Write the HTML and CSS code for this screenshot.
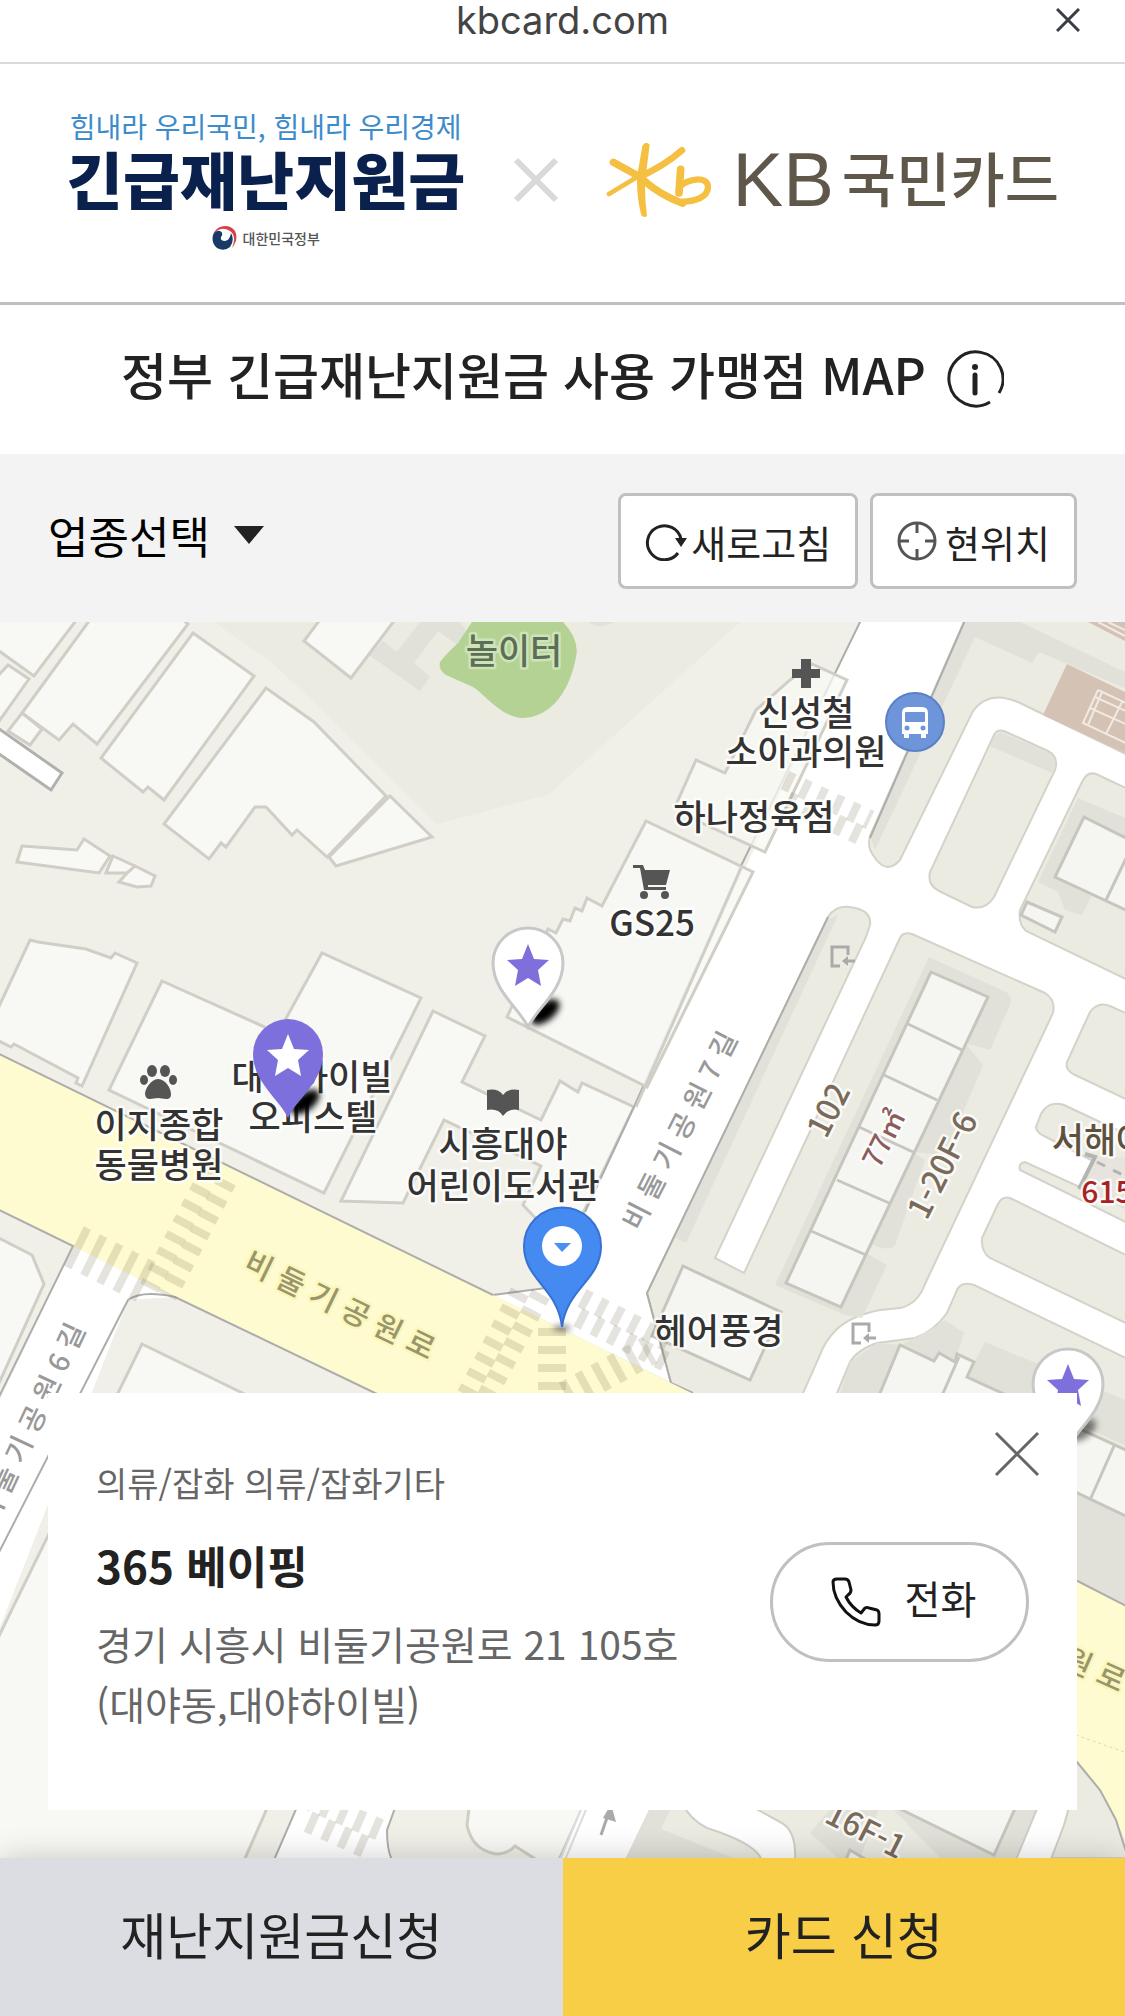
FILE: index.html
```html
<!DOCTYPE html>
<html lang="ko">

<head>
  <meta charset="UTF-8" />
  <meta name="viewport" content="width=device-width, initial-scale=1.0" />
  <title>정부 긴급재난지원금 사용 가맹점 MAP</title>
  <link rel="stylesheet" href="styles.css">
</head>

<body>
  <div class="browser-bar">
    <span class="browser-url">kbcard.com</span>
    <button class="browser-close" type="button" aria-label="창 닫기">
      <svg width="24" height="24" viewBox="0 0 24 24"><path d="M1 1 L23 23 M23 1 L1 23" stroke="#3a3d45" stroke-width="3" /></svg>
    </button>
  </div>

  <header class="banner">
    <div class="relief-logo">
      <span class="relief-slogan">힘내라 우리국민, 힘내라 우리경제</span>
      <strong class="relief-name">긴급재난지원금</strong>
      <span class="gov">
        <svg width="26" height="26" viewBox="0 0 26 26">
          <path d="M1 10 A12.500 12.500 0 0 1 23 6 Q27 14 20 23 Q25 11 18 6 Q8 0 1 10Z" fill="#d8404c" />
          <path d="M1 10 Q4 5 8 6 Q12 8 9 12 Q8 16 13 16 Q18 15 19 8 Q23 15 18 22 Q12 27 5 23 Q-1 18 1 10Z" fill="#173a66" />
        </svg>
        대한민국정부
      </span>
    </div>
    <svg class="cross" width="46" height="46" viewBox="0 0 46 46"><path d="M3 3 L43 43 M43 3 L3 43" stroke="#d9d9d9" stroke-width="6" /></svg>
    <div class="kb-logo">
      <svg width="106" height="76" viewBox="68 46 318 228">
        <g fill="none" stroke="#f5bf42" stroke-linecap="round" stroke-linejoin="round">
          <path d="M177 58 Q187 40 199 54 L187 150 Q182 200 191 268 Q182 275 174 266 Q160 215 161 150Z" fill="#f5bf42" stroke="none" />
          <path d="M90 107 L172 152" stroke-width="22" />
          <path d="M77 202 L160 152" stroke-width="14" />
          <path d="M165 152 Q240 120 296 71" stroke-width="20" />
          <path d="M180 160 Q230 205 298 230" stroke-width="22" />
          <path d="M292 128 L287 199" stroke-width="23" />
          <path d="M290 180 C310 158 372 145 374 180 C374 212 335 224 298 225" stroke-width="19" />
        </g>
      </svg>
      <span class="kb-letters">KB</span>
      <span class="kb-name">국민카드</span>
    </div>
  </header>

  <div class="page-title">
    <h1>정부 긴급재난지원금 사용 가맹점 MAP</h1>
    <button class="info" type="button" aria-label="안내">
      <svg width="58" height="60" viewBox="0 0 58 60" fill="none" stroke="#222" stroke-width="3">
        <path d="M53 43 A27 27 0 1 0 44 52" />
        <path d="M29 25 V43" stroke-width="5" stroke-linecap="round" />
        <circle cx="29" cy="17" r="3" fill="#222" stroke="none" />
      </svg>
    </button>
  </div>

  <div class="filters">
    <label class="category">
      <select aria-label="업종선택">
        <option>업종선택</option>
      </select>
      <svg width="30" height="18" viewBox="0 0 30 18"><path d="M0 0 H30 L15 18Z" fill="#222" /></svg>
    </label>
    <button class="tool" type="button">
      <svg width="42" height="40" viewBox="0 0 42 40" fill="none" stroke="#222" stroke-width="3">
        <path d="M33 32 A17 17 0 1 1 36 18" />
        <path d="M30 17 H42 L36 26Z" fill="#222" stroke="none" />
      </svg>새로고침
    </button>
    <button class="tool" type="button">
      <svg width="40" height="40" viewBox="0 0 40 40" fill="none" stroke="#555" stroke-width="3">
        <circle cx="20" cy="20" r="18" />
        <path d="M20 2 V12 M20 28 V38 M2 20 H12 M28 20 H38" />
      </svg><span class="tool-text">현위치</span>
    </button>
  </div>

  <main class="map">
    <svg class="map-canvas" viewBox="0 622 1125 1236" preserveAspectRatio="xMidYMid slice">
      <defs>
        <filter id="soft" x="-50%" y="-50%" width="200%" height="200%"><feGaussianBlur stdDeviation="3" /></filter>
        <path id="star" d="M0 -21 L6 -6 L21 -5 L10 5 L13 21 L0 13 L-13 21 L-10 5 L-21 -5 L-6 -6Z" />
        <path id="pin" d="M0 64 C-8 46 -35 28 -35 0 A35 35 0 0 1 35 0 C35 28 8 46 0 64Z" />
        <g id="gate" fill="none" stroke="#aaa" stroke-width="3">
          <path d="M9 20 H1 V1 H17 V9 M24 15 H13" />
          <path d="M17 10 L11 15 L17 20Z" fill="#aaa" stroke="none" />
        </g>
      </defs>

      <rect y="622" width="1125" height="1236" fill="#f0efe8" />

      <!-- park -->
      <path d="M214 622 L271 662 L314 702 L437 824 L550 794 L560 784 L740 622Z" fill="#ebebe2" />
      <path d="M420 622 L460 622 L468 634 L456 644 L438 631 L414 663 L430 677 L420 691 L369 655 L383 641 L397 652Z" fill="#e1e1da" />
      <path d="M588 622 H614 Q600 630 588 622Z" fill="#e1e1da" />
      <path d="M472 622 H563 Q580 640 576 657 C570 690 552 717 523 718 C500 717 486 695 473 687 L446 675 Q438 670 440 662 Q445 655 458 643Z" fill="#b4d294" />

      <!-- buildings, west side -->
      <g class="building">
        <path d="M-5 618 H78 L34 676 L-5 648Z" />
        <path d="M-5 679 L8 665 L29 679 L-5 727Z" />
        <path d="M92 617 L22 713 L59 740 L73 724 L97 744 L188 624 L180 617Z" />
        <path d="M22 713 L42 729 L30 745 L8 731Z" />
        <path d="M193 633 L254 676 L164 800 L148 787 L143 792 L101 758Z" />
        <path d="M266 688 L314 722 L386 796 L327 857 L297 830 L292 835 L266 807 H255 L226 847 L221 843 L209 859 L164 824Z" />
        <path d="M390 796 L432 837 L336 866 L329 857Z" />
        <path d="M322 617 L304 641 L351 678 L397 617Z" />
        <path d="M22 846 L77 850 L84 839 L110 856 L99 873 L17 862Z" />
        <path d="M113 856 L135 866 L130 873 H106Z" />
        <path d="M135 866 L155 876 L151 886 L137 887 L119 882 L128 872Z" />
        <path d="M-5 1015 L30 940 L38 942 L86 949 L111 958 L115 953 L137 963 L82 1086 L76 1083 L78 1078 L14 1044 L11 1047 L-5 1039Z" />
        <path d="M162 981 L278 1033 L322 953 L421 998 L324 1193 L109 1090Z" />
        <path d="M433 1011 L485 1036 L462 1082 L541 1120 L560 1081 L578 1092 L582 1083 L634 1107 L575 1230 L545 1228 L523 1205 L541 1166 L444 1120 L403 1203 L341 1201Z" />
      </g>
      <path d="M-5 726 L62 773 L51 790 L-5 751Z" fill="#fff" stroke="#b0b0ae" stroke-width="3" />

      <!-- side streets -->
      <path d="M860 622 H1125 V1620 L693 1393 L493 1295 L546 1288 L585 1212 L634 1107Z" fill="#fff" />
      <path d="M862 618 L740 868 L634 1107 L585 1212 M493 1295 L546 1288" class="curb" />
      <path d="M73 1246 L-5 1410 V1640 L128 1300 L175 1297Z" fill="#fff" />
      <g class="building">
        <path d="M812 664 L847 680 L765 852 L704 824 L675 807 L696 760 L725 773 L756 710 L790 680Z" fill-opacity=".75" />
        <path d="M646 821 L753 872 L647 1087 L507 1017 L548 929 L556 933 L563 919 L570 921 L575 908 L582 911 L587 898 L602 906Z" fill-opacity=".85" />
        <path d="M741 868 L636 1107" fill="none" />
      </g>

      <!-- apartment blocks -->
      <g class="block">
        <path d="M966 617 H1130 V756 L1022 704 Q990 688 973 711 L900 860 Q886 876 873 855 Q867 847 870 836Z" />
        <path d="M994 735 Q997 729 1004 731 L1048 751 Q1059 757 1055 770 L994 897 Q986 910 972 907 L939 891 Q927 885 930 872Z" />
        <path d="M1130 790 L1096 774 Q1087 771 1082 782 L1020 910 Q1018 924 1026 931 L1130 981Z" />
        <path d="M828 917 Q835 905 850 907 Q872 910 870 925 L866 937 L715 1258 L744 1273 L899 940 Q902 931 912 934 L1045 993 Q1056 1000 1053 1013 L925 1284 Q918 1304 900 1308 L880 1310 Q850 1316 836 1330 Q825 1341 820 1355 L800 1400 L690 1400 L671 1383 L647 1293Z" />
        <path d="M1130 1015 L1110 1006 Q1098 1001 1090 1012 L1067 1062 Q1065 1069 1073 1074 L1130 1101Z" />
        <path d="M1130 1136 L1064 1105 Q1048 1100 1041 1114 L1036 1127 Q1036 1132 1044 1136 L1130 1180Z" />
        <path d="M1130 1210 L1025 1162 Q1018 1163 1020 1170 L1130 1224Z" />
        <path d="M1130 1257 L1010 1198 Q1002 1196 998 1204 L982 1238 Q981 1252 990 1258 L1130 1325Z" />
        <path d="M1130 1360 L974 1285 Q961 1281 957 1290 L947 1313 Q934 1331 915 1338 L877 1343 Q857 1350 850 1362 L830 1410 V1858 H1130Z" />
      </g>
      <g fill="#e1e1d9">
        <path d="M965 622 H1020 L1125 672 V688 L1039 652 L1032 663 L975 637 L875 850 L871 838Z" />
        <path d="M994 737 L1000 732 L1048 752 L1056 762 L1052 773 L990 746Z" />
        <path d="M1078 798 L1125 818 V908 L1092 895 L1082 915 L1065 910 L1058 892 L1038 882Z" />
        <path d="M827 920 L838 915 L686 1243 L674 1237Z" />
        <path d="M929 957 L1006 992 Q1013 996 1010 1005 L990 1050 L965 1043 L983 1065 L945 1155 L913 1152 L925 1160 L895 1245 Q890 1252 873 1245 L866 1253 L887 1265 L862 1318 L845 1315 L775 1285Z" />
        <path d="M935 1327 L945 1320 L964 1333 L955 1360 L937 1362 L900 1345 L915 1338Z" />
        <path d="M985 1342 L1125 1400 V1445 L967 1377Z" />
        <path d="M1060 1485 L1125 1515 V1605 L1060 1575Z" />
        <path d="M877 1343 L900 1345 L878 1400 H838 L850 1362Z" />
      </g>
      <g class="building home">
        <path d="M1084 817 L1130 840 V912 L1055 877Z M1130 850 L1106 900" />
        <path d="M1027 902 L1062 917 L1055 932 L1021 915Z" />
        <path d="M931 972 L988 997 L841 1307 L786 1283Z" />
        <path d="M908 1024 L962 1050 M884 1075 L937 1100 M859 1127 L913 1152 M837 1180 L889 1203 M811 1231 L866 1255" />
        <path d="M683 1266 L781 1312 L750 1380 L652 1336Z" />
        <path d="M900 1345 L934 1361 L939 1353 L955 1362 L957 1354 L974 1362 L967 1377 L1130 1452 V1518 L878 1398Z" />
        <path d="M959 1357 L940 1400 M1114 1446 L1090 1500" />
      </g>
      <path d="M966 618 L870 838 M828 917 L647 1293 L671 1383 L693 1393" class="curb" />

      <!-- sports court -->
      <path d="M1067 664 L1125 692 V753 L1043 715Z M1088 622 H1125 V641Z" fill="#d4c2b4" />
      <g fill="none" stroke="#f1e9e2" stroke-width="2">
        <path d="M1098 690 L1130 705 M1095 697 L1130 713 M1098 690 L1083 723 L1130 745 M1102 692 L1088 725 M1090 708 L1130 726 M1122 702 L1106 734" />
        <path d="M1098 622 L1125 636 M1108 622 L1125 630" />
      </g>
      <path d="M1095 1157 H1125 V1208 L1077 1190Z" fill="#e6e4dd" />
      <path d="M1085 1154 L1095 1157 L1079 1189" fill="none" stroke="#b4b4b2" stroke-width="4" />
      <path d="M1097 1162 L1125 1176" stroke="#b4b4b2" stroke-width="3" stroke-dasharray="9 9" />

      <!-- main road -->
      <path d="M0 1055 L493 1295 L671 1383 L1125 1605 V1840 L1116 1820 L1100 1790 L1077 1762 L1000 1700 L375 1393 L175 1297 L73 1246 L0 1210Z" fill="#fffbd0" />
      <path d="M-5 1052 L493 1295 M-5 1208 L73 1246 L-5 1405 M-5 1560 L128 1300 Q142 1290 175 1297 L400 1405 M1060 1572 L1130 1608 M1060 1745 L1077 1762 L1100 1790 L1116 1820 L1128 1858" class="curb" />
      <path d="M1070 1733 L1130 1754" stroke="#ddd9ae" stroke-dasharray="3 3" />
      <g class="building">
        <path d="M-5 1236 L32 1255 L44 1284 L-5 1392Z" />
        <path d="M142 1344 L400 1470 L265 1813 L243 1863 H-5 V1644Z" />
      </g>

      <!-- south edge -->
      <path d="M296 1810 L274 1858 H391 L387 1830 L396 1800 H300Z" fill="#fff" />
      <path d="M300 1800 L274 1860 M398 1800 L387 1830 Q387 1850 392 1860 M654 1800 L626 1860" class="curb" />
      <path d="M470 1800 L467 1825 Q472 1850 496 1854 Q508 1854 515 1846 L540 1862 H558 L586 1800Z" class="building" />
      <path d="M586 1800 L560 1858 H626 L654 1800Z" fill="#fff" />
      <path d="M585 1800 L560 1860 M590 1800 L565 1860" stroke="#ddd" stroke-width="2" />
      <path d="M652 1806 L626 1858 H1045 L1060 1800Z" fill="#ebebe2" />
      <path d="M672 1806 L661 1829 L733 1858 H626 L651 1806Z M833 1806 L810 1833 L838 1858 H860 L880 1806Z M890 1806 H1040 L1015 1858 H940Z" fill="#e1e1d9" />
      <path d="M680 1800 Q690 1820 707 1828 Q760 1845 762 1862 H795 Q797 1830 780 1822 L740 1800Z" fill="#fff" stroke="#d0cec6" stroke-width="2" />
      <path d="M890 1804 L994 1855 L1017 1804Z M850 1850 L870 1862 H845Z" class="building home" />
      <path d="M1039 1804 L1015 1862 H1050 L1064 1825 L1070 1804Z" fill="#fff" stroke="#d0cec6" stroke-width="2" />
      <path d="M601 1835 L611 1806" stroke="#aaa" stroke-width="3" />
      <path d="M603 1818 L611 1804 L616 1822Z" fill="#aaa" />

      <!-- crosswalks -->
      <g fill="none" stroke="#6e6440" stroke-opacity=".18">
        <path d="M210 1171 L149 1288" stroke-width="20" stroke-dasharray="8 10" />
        <path d="M231 1173 L167 1296" stroke-width="20" stroke-dasharray="8 10" stroke-dashoffset="9" />
        <path d="M74 1246 L154 1286" stroke-width="44" stroke-dasharray="8 10" />
        <path d="M541 1294 L484 1402" stroke-width="20" stroke-dasharray="8 10" />
        <path d="M524 1284 L465 1398" stroke-width="20" stroke-dasharray="8 10" stroke-dashoffset="9" />
        <path d="M552 1328 V1395" stroke-width="28" stroke-dasharray="8 10" />
        <path d="M582 1298 L668 1342" stroke-width="20" stroke-dasharray="8 10" />
        <path d="M570 1313 L668 1363" stroke-width="20" stroke-dasharray="8 10" stroke-dashoffset="9" />
        <path d="M566 1396 L650 1350" stroke-width="30" stroke-dasharray="8 10" />
        <path d="M785 780 L870 820" stroke-width="20" stroke-dasharray="8 10" />
        <path d="M779 797 L866 838" stroke-width="20" stroke-dasharray="8 10" stroke-dashoffset="9" />
        <path d="M306 1798 L380 1830" stroke-width="22" stroke-dasharray="8 10" />
        <path d="M300 1818 L372 1850" stroke-width="22" stroke-dasharray="8 10" stroke-dashoffset="9" />
      </g>

      <!-- street names -->
      <g class="street">
        <text transform="translate(340 1305) rotate(26)" y="11" class="on-yellow">비 둘 기 공 원 로</text>
        <text transform="translate(679 1130) rotate(-63)" y="11">비 둘 기 공 원 7 길</text>
        <text transform="translate(30 1423) rotate(-65)" y="11">비 둘 기 공 원 6 길</text>
        <text transform="translate(1062 1655) rotate(24)" y="11" class="on-yellow">기 공 원 로</text>
      </g>
      <g class="lot">
        <text transform="translate(828 1110) rotate(-63)" y="12">102</text>
        <text transform="translate(883 1138) rotate(-63)" y="11" class="area">77㎡</text>
        <text transform="translate(942 1165) rotate(-63)" y="12">1-20F-6</text>
        <text transform="translate(866 1830) rotate(27)" y="12">16F-1</text>
      </g>

      <!-- places -->
      <g class="place">
        <text x="514" y="664" class="park-name">놀이터</text>
        <text x="806" y="726">신성철</text>
        <text x="806" y="765">소아과의원</text>
        <text x="754" y="830">하나정육점</text>
        <text x="652" y="936">GS25</text>
        <text x="312" y="1090">대야하이빌</text>
        <text x="313" y="1130">오피스텔</text>
        <text x="159" y="1138">이지종합</text>
        <text x="159" y="1178">동물병원</text>
        <text x="503" y="1157">시흥대야</text>
        <text x="503" y="1199">어린이도서관</text>
        <text x="719" y="1344">헤어풍경</text>
        <text x="1100" y="1153" class="apartment">서해아</text>
        <text x="1107" y="1203" class="number">615</text>
      </g>
      <path d="M801 659 H811 V669 H820 V678 H811 V688 H801 V678 H792 V669 H801Z" fill="#555" />
      <path d="M633 865 H643 L645 870 H670 L666 885 H648 V887 H666 V890 H644 L640 868 H633Z" fill="#555" />
      <circle cx="644" cy="895" r="4" fill="#555" />
      <circle cx="665" cy="895" r="4" fill="#555" />
      <g fill="#555">
        <ellipse cx="152" cy="1071" rx="5" ry="6" />
        <ellipse cx="165" cy="1071" rx="5" ry="6" />
        <ellipse cx="144" cy="1080" rx="4" ry="5" />
        <ellipse cx="173" cy="1080" rx="4" ry="5" />
        <path d="M158 1079 C166 1079 171 1089 171 1094 C171 1102 163 1098 158 1098 C153 1098 146 1102 145 1094 C145 1089 151 1079 158 1079Z" />
        <path d="M487 1090 Q498 1088 503 1095 Q508 1088 519 1090 V1110 Q508 1108 503 1116 Q498 1108 487 1110Z" />
      </g>
      <circle cx="915" cy="722" r="29" fill="#6e94da" stroke="#5a80c6" stroke-width="2" />
      <path d="M902 713 Q902 707 908 707 H922 Q928 707 928 713 V734 H926 V738 H921 V734 H909 V738 H904 V734 H902Z" fill="#fff" />
      <rect x="905" y="712" width="20" height="10" rx="1" fill="#6e94da" />
      <circle cx="907" cy="728" r="2.500" fill="#6e94da" />
      <circle cx="923" cy="728" r="2.500" fill="#6e94da" />
      <use href="#gate" x="831" y="946" />
      <use href="#gate" x="852" y="1323" />

      <!-- pins -->
      <g fill="#000" filter="url(#soft)">
        <ellipse cx="545" cy="1012" rx="17" ry="9" transform="rotate(-38 545 1012)" />
        <ellipse cx="305" cy="1102" rx="17" ry="9" transform="rotate(-38 305 1102)" />
        <ellipse cx="1083" cy="1430" rx="15" ry="8" transform="rotate(-38 1083 1430)" fill-opacity=".5" />
        <ellipse cx="562" cy="1328" rx="9" ry="2" fill-opacity=".7" />
      </g>
      <g transform="translate(528 963)">
        <use href="#pin" fill="#fff" stroke="#c8c8c8" stroke-width="3" />
        <use href="#star" y="2" fill="#7d70dc" />
      </g>
      <g transform="translate(288 1054)">
        <use href="#pin" fill="#7d70dc" />
        <use href="#star" y="1" fill="#fff" />
      </g>
      <g transform="translate(1068 1384)">
        <use href="#pin" fill="#fff" stroke="#c8c8c8" stroke-width="3" />
        <use href="#star" y="1" fill="#7d70dc" />
      </g>
      <path d="M562 1327 C558 1288 524 1280 524 1246 A38 38 0 0 1 601 1246 C601 1280 567 1288 562 1327Z" fill="#458af0" stroke="#3672d2" stroke-width="2" />
      <circle cx="562" cy="1246" r="20" fill="#fff" />
      <path d="M554 1243 H571 L562 1252Z" fill="#4a8ff2" />
    </svg>

    <section class="store">
      <div class="store-info">
        <p class="store-type">의류/잡화 의류/잡화기타</p>
        <h2 class="store-name">365 베이핑</h2>
        <p class="store-address">경기 시흥시 비둘기공원로 21 105호<br>(대야동,대야하이빌)</p>
      </div>
      <a class="call" href="#">
        <svg width="50" height="50" viewBox="0 0 50 50" fill="none" stroke="#111" stroke-width="3" stroke-linejoin="round">
          <path d="M2 5 Q2 2 6 2 H14 Q17 2 18 5 L20 13 Q20 16 17 18 L15 20 Q20 30 30 36 L34 31 Q36 30 38 31 L46 33 Q48 34 48 37 V44 Q48 48 44 48 Q28 48 15 35 Q2 21 2 5Z" />
        </svg>
        <span class="call-text">전화</span>
      </a>
      <button class="store-close" type="button" aria-label="닫기">
        <svg width="46" height="46" viewBox="0 0 46 46"><path d="M2 2 L44 44 M44 2 L2 44" stroke="#666" stroke-width="3" /></svg>
      </button>
    </section>
  </main>

  <nav class="apply">
    <a class="apply-relief" href="#">재난지원금신청</a>
    <a class="apply-card" href="#">카드 신청</a>
  </nav>
</body>

</html>
```
FILE: styles.css
```css
* {
  box-sizing: border-box;
}

body {
  display: flex;
  flex-direction: column;
  min-height: 100vh;
  margin: 0;
  font-family: "Noto Sans CJK KR", sans-serif;
  color: #222;
  background: #fff;
}

h1,
h2,
p {
  margin: 0;
}

button {
  padding: 0;
  border: 0;
  background: none;
  font-family: inherit;
  color: inherit;
}

svg {
  display: block;
  flex: none;
}

a {
  color: inherit;
  text-decoration: none;
}

/* Top bar of the in-app browser */
.browser-bar {
  display: grid;
  grid-template-columns: 1fr auto 1fr;
  align-items: center;
  padding: 0 45px 22px;
  border-bottom: 2px solid #d9d9d9;
}

.browser-url {
  grid-column: 2;
  font-family: Inter, sans-serif;
  font-size: 38px;
  line-height: 40px;
  color: #444;
}

.browser-close {
  justify-self: end;
}

/* Logos */
.banner {
  display: flex;
  align-items: center;
  justify-content: space-between;
  padding: 40px 66px 46px;
  border-bottom: 3px solid #c0c0c0;
}

.relief-logo {
  display: flex;
  flex-direction: column;
  align-items: center;
}

.relief-slogan {
  font-size: 28px;
  line-height: 44px;
  color: #3c8ccb;
}

.relief-name {
  font-size: 62px;
  font-weight: 900;
  line-height: 60px;
  color: #0a214e;
}

.gov {
  display: flex;
  align-items: center;
  gap: 5px;
  padding-top: 12px;
  font-size: 14px;
  font-weight: 500;
  line-height: 36px;
  color: #555;
}

.kb-logo {
  display: flex;
  align-items: center;
  color: #5f584a;
}

.kb-letters {
  padding: 0 8px 0 20px;
  font-family: "Liberation Sans", sans-serif;
  font-size: 76px;
  line-height: 76px;
}

.kb-name {
  padding-bottom: 6px;
  font-size: 59px;
  font-weight: 500;
  line-height: 76px;
}

.page-title {
  display: flex;
  align-items: center;
  justify-content: center;
  gap: 20px;
  height: 149px;
}

.page-title h1 {
  padding-bottom: 14px;
  font-size: 50px;
  font-weight: 500;
  line-height: 64px;
}

/* Category and map tools */
.filters {
  display: flex;
  align-items: center;
  gap: 12px;
  padding: 39px 48px 33px;
  background: #f3f3f3;
}

.category {
  display: flex;
  align-items: center;
  gap: 24px;
  margin-right: auto;
  padding-bottom: 12px;
}

.category select {
  padding: 0;
  border: 0;
  appearance: none;
  background: none;
  font-family: inherit;
  font-size: 44px;
  line-height: 60px;
  color: #000;
}

.tool {
  display: flex;
  align-items: center;
  gap: 4px;
  height: 96px;
  padding: 0 24px;
  border: 3px solid #c0c0c0;
  border-radius: 8px;
  background: #fff;
  font-size: 38px;
}

.tool-text {
  padding-left: 4px;
}

/* Map */
.map {
  position: relative;
  flex: 1;
  min-height: 800px;
  overflow: hidden;
}

.map-canvas {
  position: absolute;
  width: 100%;
  height: 100%;
}

.building {
  fill: #f8f9f4;
  stroke: #d0cec6;
  stroke-width: 3;
}

.home {
  fill: #f5f6f1;
  stroke: #c6c5be;
}

.block {
  fill: #ebebe2;
  stroke: #d4d2c9;
  stroke-width: 2;
}

.curb {
  fill: none;
  stroke: #adadab;
  stroke-width: 2;
}

.map text {
  text-anchor: middle;
  paint-order: stroke;
  stroke: #fff;
  stroke-opacity: 0.8;
  stroke-width: 5px;
  stroke-linejoin: round;
  font-weight: 500;
}

.place {
  font-size: 35px;
  fill: #333;
}

.street {
  font-size: 28px;
  fill: #999;
}

.lot {
  font-size: 32px;
  fill: #7a6a58;
}

.map .on-yellow {
  font-size: 30px;
  fill: #99966f;
  stroke: #fbf6b4;
}

.map .park-name {
  fill: #5c6f56;
  stroke: #d7e8c4;
}

.area {
  font-size: 28px;
  fill: #8c5c5c;
}

.apartment {
  fill: #5f5140;
}

.number {
  font-size: 30px;
  fill: #a82222;
}

/* Selected store */
.store {
  position: absolute;
  right: 48px;
  bottom: 48px;
  left: 48px;
  display: flex;
  align-items: center;
  justify-content: space-between;
  padding: 64px 48px 77px;
  background: #fff;
}

.store-type {
  font-size: 34px;
  line-height: 52px;
  color: #666;
}

.store-name {
  margin: 24px 0 16px;
  font-size: 44px;
  line-height: 64px;
}

.store-address {
  font-size: 39px;
  line-height: 60px;
  color: #666;
}

.call {
  display: flex;
  align-items: center;
  justify-content: center;
  gap: 24px;
  width: 259px;
  height: 120px;
  margin-top: 14px;
  padding-left: 8px;
  border: 3px solid #c0c0c0;
  border-radius: 60px;
  font-size: 39px;
}

.call-text {
  padding-bottom: 10px;
}

.store-close {
  position: absolute;
  top: 38px;
  right: 37px;
}

/* Bottom buttons */
.apply {
  position: relative;
  display: grid;
  grid-template-columns: 1fr 1fr;
  box-shadow: 0 0 30px rgba(0, 0, 0, 0.2);
  font-size: 50px;
  line-height: 150px;
  text-align: center;
}

.apply a {
  padding-bottom: 8px;
}

.apply-relief {
  background: #dcdde2;
}

.apply-card {
  background: #f8ce46;
}
```
